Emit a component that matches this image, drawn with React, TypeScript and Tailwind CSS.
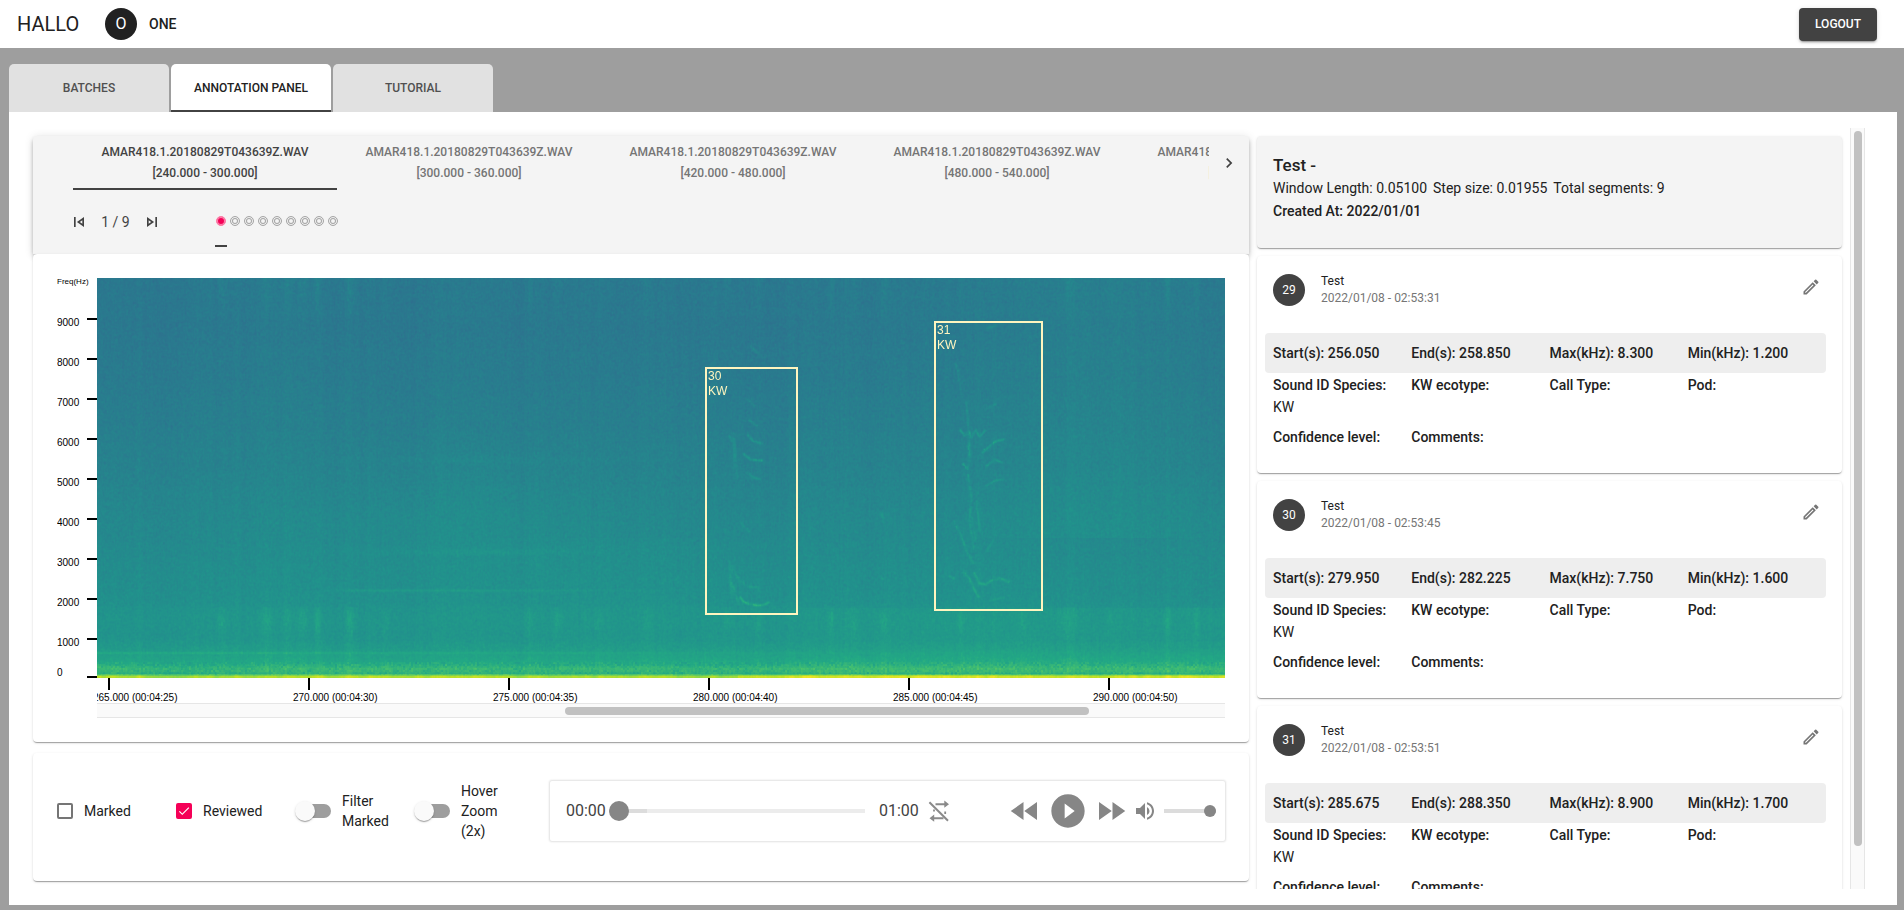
import { useEffect, useRef } from "react";
import {
  MdCheck,
  MdChevronRight,
  MdFastForward,
  MdFastRewind,
  MdOutlineModeEdit,
  MdOutlineSkipNext,
  MdOutlineSkipPrevious,
  MdPlayCircleFilled,
  MdVolumeUp,
} from "react-icons/md";

const PAPER =
  "rounded-[4px] shadow-[0_2px_1px_-1px_rgba(0,0,0,0.2),0_1px_1px_0_rgba(0,0,0,0.14),0_1px_3px_0_rgba(0,0,0,0.12)]";

const FILES = [
  "[240.000 - 300.000]",
  "[300.000 - 360.000]",
  "[420.000 - 480.000]",
  "[480.000 - 540.000]",
  "[540.000 - 600.000]",
];

const ANNOTATIONS = [
  { id: 29, date: "2022/01/08 - 02:53:31", start: "256.050", end: "258.850", max: "8.300", min: "1.200" },
  { id: 30, date: "2022/01/08 - 02:53:45", start: "279.950", end: "282.225", max: "7.750", min: "1.600" },
  { id: 31, date: "2022/01/08 - 02:53:51", start: "285.675", end: "288.350", max: "8.900", min: "1.700" },
];

const TIME_TICKS = [
  "265.000 (00:04:25)",
  "270.000 (00:04:30)",
  "275.000 (00:04:35)",
  "280.000 (00:04:40)",
  "285.000 (00:04:45)",
  "290.000 (00:04:50)",
];

/* ---------- spectrogram ---------- */

const W = 1128;
const H = 400;

const VIRIDIS = [
  [68, 1, 84],
  [72, 36, 117],
  [65, 68, 135],
  [53, 95, 141],
  [42, 120, 142],
  [33, 145, 140],
  [34, 168, 132],
  [68, 191, 112],
  [122, 209, 81],
  [189, 223, 38],
  [253, 231, 37],
];

const PROFILE = [
  [0, 0.405],
  [60, 0.408],
  [130, 0.424],
  [200, 0.449],
  [260, 0.475],
  [320, 0.498],
  [336, 0.52],
  [362, 0.518],
  [372, 0.55],
  [382, 0.585],
  [386, 0.61],
  [390, 0.66],
  [393, 0.65],
  [395, 0.63],
  [397, 0.8],
  [398, 0.88],
  [400, 0.88],
];

// [x, y, x, y, ...] polylines followed by their intensity
const CALLS: [number[], number][] = [
  [[643, 319, 646, 323, 653, 326, 661, 327, 667, 326, 671, 324], 0.15],
  [[634, 288, 638, 296, 643, 302, 650, 308, 662, 309], 0.05],
  [[632, 300, 637, 312, 641, 325], 0.06],
  [[636, 155, 637, 190], 0.04],
  [[632, 158, 634, 162], 0.05],
  [[650, 121, 656, 127], 0.08],
  [[652, 142, 659, 147], 0.08],
  [[651, 157, 656, 163, 665, 165], 0.12],
  [[647, 176, 653, 181, 664, 182], 0.12],
  [[650, 194, 656, 199, 663, 201], 0.07],
  [[644, 245, 651, 253], 0.06],
  [[632, 282, 634, 318], 0.05],
  [[637, 160, 640, 200], 0.04],
  [[863, 152, 867, 157, 871, 153, 874, 159, 878, 152, 882, 158, 888, 152], 0.1],
  [[869, 124, 872, 160, 872, 180, 870, 190, 874, 220, 872, 240, 876, 270], 0.06],
  [[871, 165, 872, 176], 0.07],
  [[875, 240, 878, 262], 0.05],
  [[866, 186, 868, 189], 0.12],
  [[885, 174, 893, 167, 897, 163, 906, 161], 0.14],
  [[889, 188, 897, 181, 904, 184], 0.08],
  [[889, 207, 898, 202, 906, 201], 0.06],
  [[879, 223, 882, 252], 0.06],
  [[857, 243, 860, 250], 0.09],
  [[862, 252, 870, 275, 876, 285], 0.06],
  [[889, 273, 896, 262], 0.05],
  [[853, 298, 856, 300], 0.13],
  [[866, 294, 872, 300, 876, 310, 881, 318], 0.09],
  [[877, 295, 882, 305, 888, 306, 894, 302, 903, 300, 911, 303], 0.11],
  [[893, 322, 906, 319], 0.05],
  [[858, 85, 861, 92], 0.07],
  [[860, 93, 864, 115], 0.04],
  [[890, 50, 896, 48], 0.05],
  [[888, 130, 898, 126], 0.05],
  [[784, 234, 786, 244], 0.07],
  [[783, 298, 785, 300], 0.07],
  [[653, 68, 660, 74], 0.06],
];

// [center, half width, strength]
const CLICKS = [
  [124, 5, 0.05],
  [169, 5, 0.06],
  [190, 4, 0.04],
  [205, 5, 0.05],
  [220, 3, 0.08],
  [253, 4, 0.08],
  [288, 4, 0.03],
  [432, 4, 0.05],
  [460, 4, 0.05],
  [500, 4, 0.03],
  [550, 4, 0.03],
  [630, 4, 0.04],
  [660, 5, 0.04],
  [734, 3, 0.05],
  [756, 4, 0.04],
  [786, 4, 0.05],
  [863, 3, 0.05],
  [925, 4, 0.04],
  [971, 8, 0.05],
  [1012, 4, 0.03],
  [1070, 3, 0.07],
  [1099, 3, 0.07],
];

function createRandom(seed: number) {
  let s = seed;
  return () => {
    s = (s + 0x6d2b79f5) | 0;
    let t = Math.imul(s ^ (s >>> 15), 1 | s);
    t = (t + Math.imul(t ^ (t >>> 7), 61 | t)) ^ t;
    return ((t ^ (t >>> 14)) >>> 0) / 4294967296;
  };
}

function smoothNoise(length: number, step: number, random: () => number) {
  const knots = Array.from({ length: Math.ceil(length / step) + 2 }, () => random() * 2 - 1);
  return Array.from({ length }, (_, i) => {
    const k = Math.floor(i / step);
    const t = i / step - k;
    const e = t * t * (3 - 2 * t);
    return knots[k] * (1 - e) + knots[k + 1] * e;
  });
}

function drawSpectrogram(ctx: CanvasRenderingContext2D) {
  const random = createRandom(418);
  const values = new Float32Array(W * H);
  const wide = smoothNoise(W, 60, random);
  const narrow = smoothNoise(W, 7, random);
  const fine = smoothNoise(W, 2, random);
  const rowNoise = smoothNoise(H, 5, random);
  const bottom = smoothNoise(W, 90, random);
  const clickAt = new Float32Array(W);
  for (const [c, w, s] of CLICKS) {
    for (let x = 0; x < W; x++) clickAt[x] += s * Math.exp(-(((x - c) / w) ** 2));
  }
  const raw = Float32Array.from({ length: W * H }, () => random() + random() - 1);

  for (let y = 0; y < H; y++) {
    let p = 0;
    while (p < PROFILE.length - 2 && PROFILE[p + 1][0] <= y) p++;
    const [y0, v0] = PROFILE[p];
    const [y1, v1] = PROFILE[p + 1];
    const base = v0 + ((v1 - v0) * (y - y0)) / (y1 - y0);
    const low = y > 328 ? 0.25 + 0.55 * Math.exp(-(((y - 343) / 11) ** 2)) : y > 50 ? 0.05 : 0.5 - y / 110;
    for (let x = 0; x < W; x++) {
      let v = base + wide[x] * 0.007 + narrow[x] * 0.006 + fine[x] * 0.005 + rowNoise[y] * 0.003;
      v += clickAt[x] * low * (1 + raw[(y >> 2) * W + (x >> 1)] * 0.5);
      if (y < 260) v += 0.022 * Math.exp(-(((x - 1010) / 90) ** 2)) - 0.008 * Math.exp(-(((x - 530) / 140) ** 2));
      if (y >= 330 && y < 395) v += 0.014 / (1 + Math.exp((700 - x) / 30));
      const hum = Math.exp(-(((x - 380) / 130) ** 2));
      v += hum * 0.024 * Math.exp(-(((y - 274) / 3) ** 2));
      v += hum * 0.014 * Math.exp(-(((y - 240) / 60) ** 2));
      v += hum * 0.014 * Math.exp(-(((y - 182) / 4) ** 2));
      if (x > 220) {
        const fade = Math.min(1, (x - 220) / 40);
        v += fade * 0.042 * Math.exp(-(((x - 300) / 190) ** 2)) * Math.exp(-(((y - 312) / 1.5) ** 2));
      }
      v += 0.045 * Math.exp(-((x / 560) ** 2)) * Math.exp(-(((y - 374.5) / 1.2) ** 2));
      if (y >= 384 && y < 397) v += bottom[x] * 0.02 + raw[((y >> 1) * W + (x >> 1)) % (W * H)] * 0.035;
      if (y >= 397) v += bottom[x] * 0.04 + (x > 640 ? 0.05 : 0) + narrow[x] * 0.03;
      const i = y * W + x;
      const n =
        raw[i] * 0.5 +
        (raw[i - 1] ?? 0) * 0.25 +
        (raw[i + 1] ?? 0) * 0.25 +
        (raw[i - W] ?? 0) * 0.35 +
        (raw[i + W] ?? 0) * 0.35 +
        raw[(y >> 1) * W + (x >> 1)] * 0.35;
      values[i] = v + n * 0.024;
    }
  }

  for (const [pts, strength] of CALLS) {
    const mask = new Map<number, number>();
    for (let k = 0; k + 3 < pts.length; k += 2) {
      const [xa, ya, xb, yb] = pts.slice(k, k + 4);
      const steps = Math.ceil(Math.hypot(xb - xa, yb - ya) * 2);
      for (let s = 0; s <= steps; s++) {
        const cx = xa + ((xb - xa) * s) / steps;
        const cy = ya + ((yb - ya) * s) / steps;
        for (let dy = -3; dy <= 3; dy++) {
          for (let dx = -3; dx <= 3; dx++) {
            const px = Math.round(cx) + dx;
            const py = Math.round(cy) + dy;
            const d2 = (px - cx) ** 2 + (py - cy) ** 2;
            const i = py * W + px;
            mask.set(i, Math.max(mask.get(i) ?? 0, Math.exp(-d2 / 2)));
          }
        }
      }
    }
    mask.forEach((m, i) => {
      const x = i % W;
      const y = (i - x) / W;
      values[i] += m * strength * (0.62 + raw[(y >> 2) * W + (x >> 2)] * 0.5);
    });
  }

  const image = ctx.createImageData(W, H);
  for (let i = 0; i < W * H; i++) {
    const t = Math.min(0.9999, Math.max(0, values[i])) * 10;
    const k = Math.floor(t);
    const f = t - k;
    for (let c = 0; c < 3; c++) image.data[i * 4 + c] = VIRIDIS[k][c] * (1 - f) + VIRIDIS[k + 1][c] * f;
    image.data[i * 4 + 3] = 255;
  }
  ctx.putImageData(image, 0, 0);
}

function Spectrogram() {
  const ref = useRef<HTMLCanvasElement>(null);
  useEffect(() => {
    const ctx = ref.current?.getContext("2d");
    if (ctx) drawSpectrogram(ctx);
  }, []);
  return <canvas ref={ref} width={W} height={H} className="block h-[400px] w-full" />;
}

function FrequencyAxis() {
  return (
    <svg width="40" height="404" className="block shrink-0" fontFamily="'Liberation Sans', Arial, sans-serif" fontSize="10">
      <text x="0" y="6" fontSize="8">
        Freq(Hz)
      </text>
      {[9000, 8000, 7000, 6000, 5000, 4000, 3000, 2000, 1000].map((f, i) => (
        <g key={f}>
          <rect x="30" y={40 + i * 40} width="10" height="2" />
          <text x="0" y={48 + i * 40}>
            {f}
          </text>
        </g>
      ))}
      <rect x="30" y="398" width="10" height="2" />
      <text x="0" y="398">
        0
      </text>
    </svg>
  );
}

function TimeAxis() {
  return (
    <svg height="25" className="block w-full" fontFamily="'Liberation Sans', Arial, sans-serif" fontSize="10">
      {TIME_TICKS.map((t, i) => (
        <g key={t}>
          <rect x={11 + i * 200} y="0" width="2" height="12" />
          <text x={-4 + i * 200} y="23">
            {t}
          </text>
        </g>
      ))}
    </svg>
  );
}

/* ---------- header ---------- */

function Header() {
  return (
    <header className="flex h-12 shrink-0 items-center bg-white pr-[27px] pl-[17px]">
      <h1 className="w-[88px] text-xl text-[#212121]">HALLO</h1>
      <span className="flex size-8 items-center justify-center rounded-full bg-[#212121] text-base text-white">O</span>
      <span className="ml-3 text-sm font-medium text-[#212121]">ONE</span>
      <button className="ml-auto h-[33px] rounded-[4px] bg-[#424242] px-4 text-xs font-medium text-white shadow-[0_3px_1px_-2px_rgba(0,0,0,0.2),0_2px_2px_0_rgba(0,0,0,0.14),0_1px_5px_0_rgba(0,0,0,0.12)]">
        LOGOUT
      </button>
    </header>
  );
}

function MainTabs() {
  const base = "h-12 w-40 rounded-t-[5px] text-xs font-medium";
  return (
    <nav role="tablist" className="mt-4 flex shrink-0 gap-[2px] pl-[9px]">
      <button role="tab" className={`${base} bg-[#e1e1e1] text-[#505050]`}>
        BATCHES
      </button>
      <button role="tab" aria-selected="true" className={`${base} border-b-2 border-[#424242] bg-white pt-[2px] text-[#212121]`}>
        ANNOTATION PANEL
      </button>
      <button role="tab" className={`${base} bg-[#e1e1e1] text-[#505050]`}>
        TUTORIAL
      </button>
    </nav>
  );
}

/* ---------- left column ---------- */

function FileBar() {
  return (
    <section className="h-[118px] rounded-t-[4px] bg-[#f4f4f4] px-10 shadow-[0_2px_4px_-1px_rgba(0,0,0,0.2),0_4px_5px_0_rgba(0,0,0,0.14),0_1px_10px_0_rgba(0,0,0,0.12)]">
      <div className="-mr-10 flex items-center">
        <div role="tablist" className="flex min-w-0 flex-1 overflow-hidden">
          {FILES.map((range, i) => (
            <button
              key={range}
              role="tab"
              className={
                "h-[54px] w-[264px] shrink-0 border-b-2 pt-[2px] text-xs leading-[21px] font-medium " +
                (i === 0 ? "border-[#424242] text-[#424242]" : "border-transparent text-[#757575]")
              }
            >
              AMAR418.1.20180829T043639Z.WAV
              <br />
              {range}
            </button>
          ))}
        </div>
        <button aria-label="Next files" className="flex w-10 justify-center text-[#424242]">
          <MdChevronRight size={20} />
        </button>
      </div>
      <div className="flex h-[57px] items-start">
        <div className="mt-[22px] flex w-[142px] items-center text-[#424242]">
          <button aria-label="Previous segment" className="-ml-1">
            <MdOutlineSkipPrevious size={20} />
          </button>
          <span className="w-[53px] text-center text-sm">1 / 9</span>
          <button aria-label="Next segment">
            <MdOutlineSkipNext size={20} />
          </button>
        </div>
        <div className="flex gap-[2px]">
          {Array.from({ length: 9 }, (_, i) => (
            <label
              key={i}
              className={"flex h-[57px] w-3 justify-center border-b-2 pt-[26px] " + (i === 0 ? "border-[#424242]" : "border-transparent")}
            >
              <input
                type="radio"
                name="segment"
                defaultChecked={i === 0}
                aria-label={`Segment ${i + 1}`}
                className="size-[10px] appearance-none rounded-full border border-[#a5a5a5] shadow-[inset_0_0_0_1px_#f4f4f4,inset_0_0_0_2px_#a5a5a5] checked:border-[#ff7fa8] checked:bg-[#f50057] checked:shadow-[inset_0_0_0_1px_#f98bb0]"
              />
            </label>
          ))}
        </div>
      </div>
    </section>
  );
}

function ChartCard() {
  return (
    <section className={`${PAPER} relative h-[488px] bg-white pt-6 pr-6 pl-6`}>
      <div className="flex items-start">
        <FrequencyAxis />
        <div className="min-w-0 flex-1">
          <div className="relative overflow-hidden font-['Liberation_Sans',Arial,sans-serif] text-xs text-[#fff5bf]">
            <Spectrogram />
            <div className="absolute top-[89px] left-[608px] h-[248px] w-[93px] border-2 border-[#fff5bf] pl-[1px] leading-[15px]">
              30
              <br />
              KW
            </div>
            <div className="absolute top-[43px] left-[837px] h-[290px] w-[109px] border-2 border-[#fff5bf] pl-[1px] leading-[15px]">
              31
              <br />
              KW
            </div>
          </div>
          <TimeAxis />
          <div className="flex h-[15px] items-center border-y border-[#e6e6e6] bg-[#fafafa]">
            <div className="ml-[41.5%] h-2 w-[46.4%] rounded-full bg-[#c1c1c1]" />
          </div>
        </div>
      </div>
    </section>
  );
}

function Tick({ label, checked }: { label: string; checked?: boolean }) {
  return (
    <label className="flex items-center gap-[11px] text-sm text-[#212121]">
      <span className="relative flex size-4">
        <input
          type="checkbox"
          defaultChecked={checked}
          className="peer size-4 appearance-none rounded-[2px] border-2 border-[#757575] checked:border-[#f50057] checked:bg-[#f50057]"
        />
        <MdCheck size={14} className="pointer-events-none absolute top-[1px] left-[1px] hidden text-white peer-checked:block" />
      </span>
      {label}
    </label>
  );
}

function Toggle({ label }: { label: string }) {
  return (
    <label className="flex items-center gap-[11px] text-sm leading-5 text-[#212121]">
      <span className="relative flex h-5 w-9 items-center justify-end">
        <input type="checkbox" role="switch" className="h-[14px] w-[34px] appearance-none rounded-full bg-[#9e9e9e]" />
        <span className="pointer-events-none absolute top-0 left-0 size-5 rounded-full bg-[#fafafa] shadow-[0_2px_1px_-1px_rgba(0,0,0,0.2),0_1px_1px_0_rgba(0,0,0,0.14),0_1px_3px_0_rgba(0,0,0,0.12)]" />
      </span>
      <span className="w-12">{label}</span>
    </label>
  );
}

function RepeatOff() {
  return (
    <svg width="24" height="24" viewBox="0 0 24 24" fill="none" stroke="#8a8a8a" strokeWidth="2">
      <path d="M2.4 3.2 L21 21.8" />
      <path d="M8.5 5.2 H18 M7 19.2 H16.5" />
      <path d="M17.3 1.6 L22 5.2 L17.3 8.8 Z M7.2 15.6 L2.5 19.2 L7.2 22.8 Z" fill="#8a8a8a" stroke="none" />
      <path d="M7 10.6 V12.6 M18.2 12.4 V15" strokeWidth="1.8" />
    </svg>
  );
}

function AudioPlayer() {
  return (
    <div className="flex h-[60px] flex-1 items-center rounded-[2px] bg-white pr-[9px] pl-4 text-base text-[#424242] shadow-[0_0_2px_1px_rgba(0,0,0,0.12)]">
      <span className="w-[43px]">00:00</span>
      <input
        type="range"
        aria-label="Position"
        defaultValue={0}
        className="h-1 min-w-0 flex-1 appearance-none bg-[linear-gradient(to_right,#dcdcdc_15%,#ececec_15%)] [&::-webkit-slider-thumb]:size-5 [&::-webkit-slider-thumb]:appearance-none [&::-webkit-slider-thumb]:rounded-full [&::-webkit-slider-thumb]:bg-[#868686]"
      />
      <span className="ml-[14px] w-12">01:00</span>
      <button aria-label="Repeat">
        <RepeatOff />
      </button>
      <div className="ml-14 flex items-center text-[#868686]">
        <button aria-label="Rewind">
          <MdFastRewind size={36} />
        </button>
        <button aria-label="Play" className="mx-[5px]">
          <MdPlayCircleFilled size={40} />
        </button>
        <button aria-label="Forward">
          <MdFastForward size={36} />
        </button>
        <button aria-label="Mute" className="ml-1">
          <MdVolumeUp size={24} />
        </button>
        <input
          type="range"
          aria-label="Volume"
          defaultValue={100}
          className="ml-[7px] h-1 w-[52px] appearance-none bg-[#dcdcdc] [&::-webkit-slider-thumb]:size-3 [&::-webkit-slider-thumb]:appearance-none [&::-webkit-slider-thumb]:rounded-full [&::-webkit-slider-thumb]:bg-[#868686]"
        />
      </div>
    </div>
  );
}

function Controls() {
  return (
    <section className={`${PAPER} mt-[11px] flex h-32 items-start bg-white px-6 pt-7`}>
      <div className="grid h-[60px] w-[493px] shrink-0 grid-cols-[119px_119px_119px_136px] items-center">
        <Tick label="Marked" />
        <Tick label="Reviewed" checked />
        <Toggle label="Filter Marked" />
        <Toggle label="Hover Zoom (2x)" />
      </div>
      <AudioPlayer />
    </section>
  );
}

/* ---------- right column ---------- */

function BatchCard() {
  return (
    <section className={`${PAPER} h-28 shrink-0 bg-[#f4f4f4] px-4 pt-[18px] text-sm leading-[23px] text-[#212121]`}>
      <h2 className="text-[17px] font-medium">Test -</h2>
      <p className="flex gap-[6px]">
        <span>Window Length: 0.05100</span>
        <span>Step size: 0.01955</span>
        <span>Total segments: 9</span>
      </p>
      <p className="font-medium">Created At: 2022/01/01</p>
    </section>
  );
}

function AnnotationCard({ a }: { a: (typeof ANNOTATIONS)[number] }) {
  return (
    <section className={`${PAPER} h-[217px] shrink-0 bg-white pt-[17px] pr-4 pl-2 text-sm text-[#212121]`}>
      <div className="flex h-[60px] items-start pl-2">
        <span className="mt-[1px] flex size-8 items-center justify-center rounded-full bg-[#424242] text-xs text-white">{a.id}</span>
        <div className="ml-4 text-xs leading-[17px]">
          <p>Test</p>
          <p className="text-[#757575]">{a.date}</p>
        </div>
        <button aria-label={`Edit ${a.id}`} className="mt-1 mr-[5px] ml-auto text-[#757575]">
          <MdOutlineModeEdit size={20} />
        </button>
      </div>
      <div className="grid h-10 grid-cols-4 items-center rounded-[4px] bg-[#eee] pl-2 font-medium">
        <span>Start(s): {a.start}</span>
        <span>End(s): {a.end}</span>
        <span>Max(kHz): {a.max}</span>
        <span>Min(kHz): {a.min}</span>
      </div>
      <div className="mt-[1px] grid grid-cols-4 gap-y-2 pl-2 leading-[22px]">
        <p>
          <strong className="font-medium">Sound ID Species:</strong>
          <br />
          KW
        </p>
        <strong className="font-medium">KW ecotype:</strong>
        <strong className="font-medium">Call Type:</strong>
        <strong className="font-medium">Pod:</strong>
        <strong className="font-medium">Confidence level:</strong>
        <strong className="font-medium">Comments:</strong>
      </div>
    </section>
  );
}

export default function App() {
  return (
    <div className="flex h-screen flex-col bg-[#9e9e9e] font-['Roboto',sans-serif]">
      <Header />
      <MainTabs />
      <main className="mr-[7px] mb-[5px] ml-[9px] grid min-h-0 flex-1 grid-cols-[2fr_1fr] gap-2 bg-white py-4 pr-8 pl-6">
        <div className="min-w-0 pt-2">
          <FileBar />
          <ChartCard />
          <Controls />
        </div>
        <div className="flex min-h-0 min-w-0">
          <div className="-ml-1 flex min-w-0 flex-1 flex-col gap-2 overflow-hidden pt-2 pr-2 pl-1">
            <BatchCard />
            {ANNOTATIONS.map((a) => (
              <AnnotationCard key={a.id} a={a} />
            ))}
          </div>
          <div className="flex w-[15px] justify-center border-x border-[#e6e6e6] bg-[#fafafa] pt-[3px]">
            <div className="h-[94.3%] w-2 rounded-full bg-[#c1c1c1]" />
          </div>
        </div>
      </main>
    </div>
  );
}
